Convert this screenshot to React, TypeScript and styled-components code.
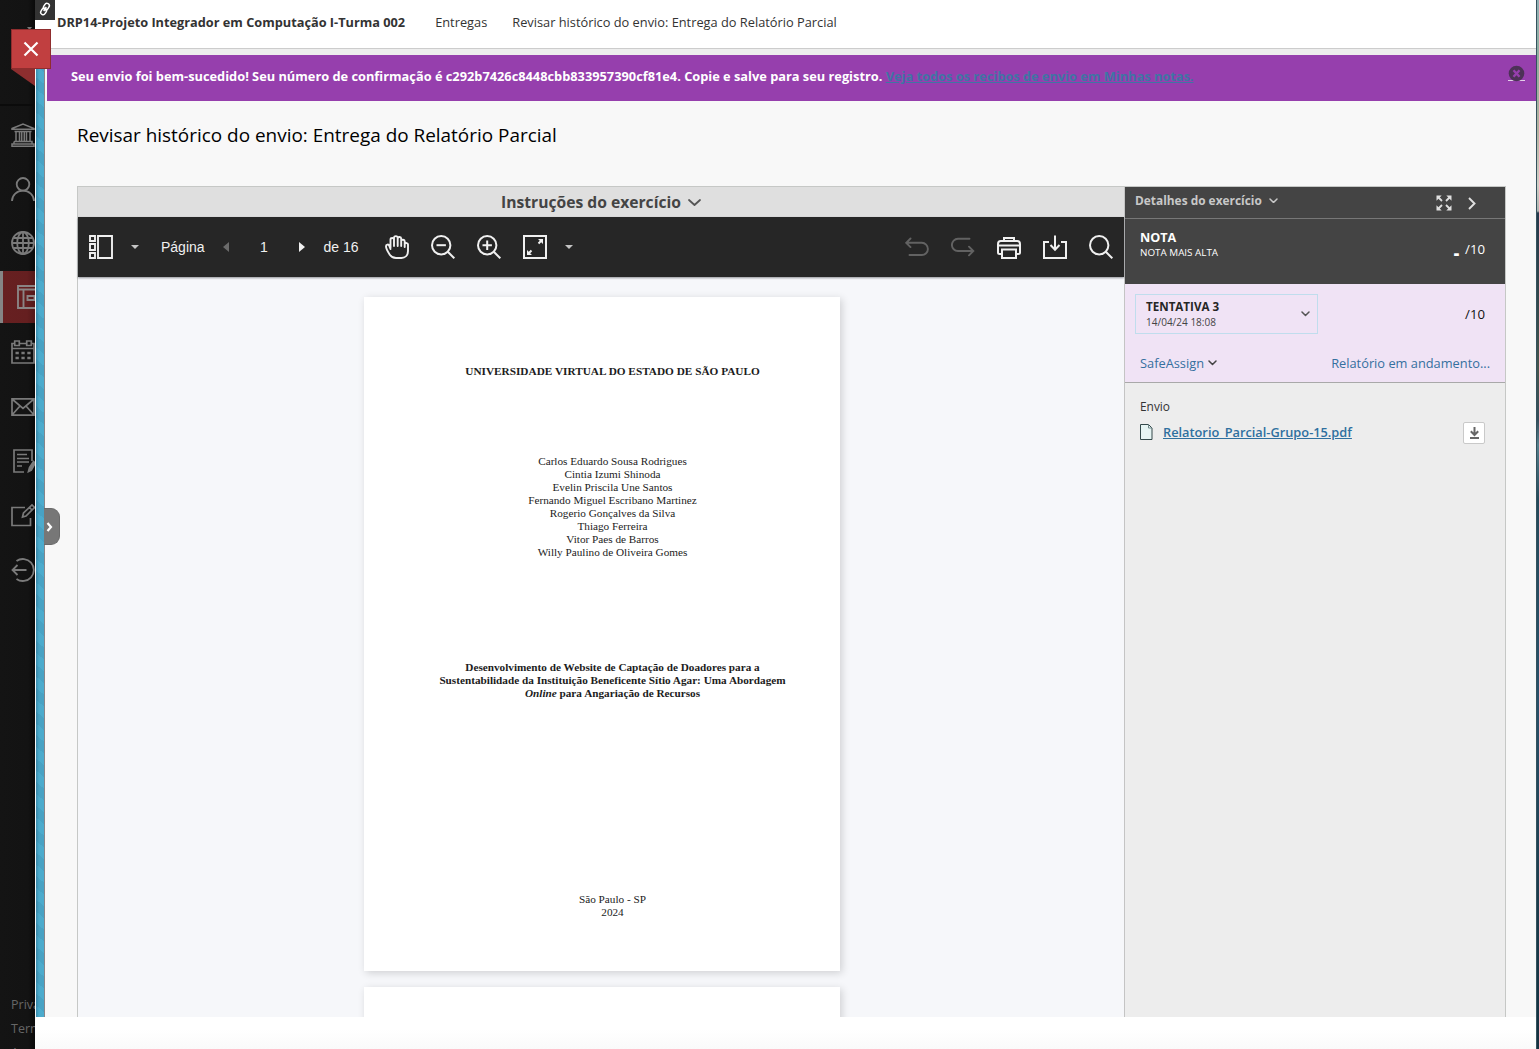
import React from 'react';
import styled, { createGlobalStyle } from 'styled-components';

const Global = createGlobalStyle`
  * { box-sizing: border-box; }
  body { margin: 0; background: #fff; font-family: "Open Sans", "Noto Sans", sans-serif; }
  a { color: inherit; }
`;

const Screen = styled.div`
  position: relative;
  display: flex;
  width: 1539px;
  height: 1049px;
  overflow: hidden;
`;

/* ---------- dark navigation rail ---------- */

const Rail = styled.nav`
  display: flex;
  flex-direction: column;
  flex: none;
  width: 35px;
  height: 1049px;
  overflow: hidden;
  background: linear-gradient(to right, #141414 0, #131313 28px, #0a0a0a 35px);
`;

const RailTop = styled.div`
  display: flex;
  flex: none;
  justify-content: flex-end;
  height: 106px;
  padding: 27px 3px 0 0;
  border-bottom: 2px solid #0b0b0b;
  margin-bottom: 2px;
`;

const RailItem = styled.div<{ $active?: boolean; $late?: boolean }>`
  display: flex;
  flex: none;
  align-items: center;
  height: ${p => (p.$active ? 52 : p.$late ? 54.4 : 54)}px;
  margin: ${p => (p.$active ? '1px 0 2px' : '0')};
  padding-left: ${p => (p.$active ? 14 : 11)}px;
  border-left: ${p => (p.$active ? '3px solid #858585' : '0')};
  background: ${p => (p.$active ? 'linear-gradient(to right, #672021 0, #651f20 24px, #541819 32px)' : 'none')};
  svg { flex: none; }
`;

const RailFooter = styled.div`
  margin-top: auto;
  height: 56px;
  padding-left: 11px;
  flex: none;
  font-size: 12.5px;
  line-height: 24px;
  color: #666;
  white-space: nowrap;
`;

const CloseTab = styled.div`
  position: absolute;
  left: 11px;
  top: 29px;
  z-index: 3;
  display: flex;
  align-items: center;
  justify-content: center;
  width: 40px;
  height: 40px;
  padding-bottom: 1px;
  border: 1px solid #8f2d2e;
  background: #c13f40;
`;

const TabFold = styled.div`
  position: absolute;
  left: 11px;
  top: 69px;
  width: 24px;
  height: 17px;
  background: #8d2e2f;
  clip-path: polygon(0 0, 100% 0, 100% 100%);
`;

const LinkBadge = styled.div`
  position: absolute;
  left: 35px;
  top: 0;
  display: flex;
  align-items: center;
  justify-content: center;
  width: 20px;
  height: 20px;
  padding-bottom: 3px;
  background: #333;
`;

/* ---------- main panel ---------- */

const Panel = styled.main`
  display: flex;
  flex-direction: column;
  flex: none;
  width: 1501px;
  background: #fff;
`;

const Crumbs = styled.header`
  display: flex;
  flex: none;
  height: 49px;
  padding-left: 22px;
  border-bottom: 1px solid #ccc;
  line-height: 45px;
  color: #333;
  white-space: nowrap;
`;

const Crumb = styled.span<{ $bold?: boolean; $gap?: number }>`
  font-weight: ${p => (p.$bold ? 700 : 400)};
  font-size: ${p => (p.$bold ? 12.76 : 12.8)}px;
  margin-right: ${p => p.$gap ?? 0}px;
`;

const Body = styled.div`
  display: flex;
  flex: none;
  height: 968px;
  background: #f8f8f8;
`;

const Stripe = styled.div`
  position: relative;
  flex: none;
  width: 10px;
  border-left: 1px solid #f4f8fa;
  border-right: 1px solid #87868a;
  background:
    linear-gradient(to right, rgba(20, 70, 100, 0.3), rgba(20, 70, 100, 0) 3px),
    repeating-linear-gradient(40deg, #4cabcd 0 9px, #48a2c4 9px 18px);
`;

const Handle = styled.div`
  position: absolute;
  left: 8px;
  top: 459px;
  display: flex;
  align-items: center;
  justify-content: center;
  width: 16px;
  height: 37px;
  padding-right: 5px;
  border-radius: 0 9px 9px 0;
  border: 1px solid #6a6a6a;
  border-left: 0;
  background: #777;
`;

const Content = styled.div`
  display: flex;
  flex-direction: column;
  flex: 1;
`;

const Gap = styled.div`
  flex: none;
  height: 6px;
  background: #ededed;
`;

const Banner = styled.div`
  display: flex;
  flex: none;
  justify-content: space-between;
  height: 46px;
  margin-left: 2px;
  padding: 0 11px 0 24px;
  background: #963fad;
  color: #fff;
  font-size: 12.8px;
  font-weight: 700;
  line-height: 43px;
  white-space: nowrap;
`;

const BannerLink = styled.a`
  color: #4075a4;
  text-decoration: underline;
`;

const Dismiss = styled.div`
  flex: none;
  width: 17px;
  height: 17px;
  margin-top: 10px;
  line-height: 0;
`;

const Title = styled.h1`
  flex: none;
  margin: 0;
  height: 85px;
  padding: 20px 0 0 32px;
  font-size: 18.93px;
  font-weight: 400;
  line-height: 28px;
  color: #000;
`;

const Frame = styled.div`
  display: flex;
  flex: 1;
  min-height: 0;
  margin: 0 30px 0 32px;
  border: 1px solid #c6c8c6;
  border-bottom: 0;
`;

const Viewer = styled.section`
  display: flex;
  flex-direction: column;
  flex: none;
  width: 1047px;
  border-right: 1px solid #c4c4c4;
`;

const Instructions = styled.div`
  display: flex;
  flex: none;
  align-items: center;
  justify-content: center;
  gap: 7px;
  height: 30px;
  background: #dfdfdf;
  color: #444;
  font-size: 15.66px;
  font-weight: 700;
  line-height: 30px;
`;

const Toolbar = styled.div`
  position: relative;
  display: flex;
  flex: none;
  align-items: center;
  height: 60px;
  padding: 0 11px;
  background: #262626;
  box-shadow: 0 1px 2px rgba(20, 25, 35, 0.45);
  color: #f0f0f0;
  font-family: "Liberation Sans", Arial, sans-serif;
  font-size: 14px;
`;

const ToolText = styled.span<{ $w: number }>`
  flex: none;
  width: ${p => p.$w}px;
  text-align: center;
  white-space: nowrap;
`;

const Caret = styled.i<{ $l?: number; $r?: number }>`
  flex: none;
  margin: 0 ${p => p.$r ?? 0}px 0 ${p => p.$l ?? 0}px;
  border: 4px solid transparent;
  border-top: 4.5px solid #c4c4c4;
  border-bottom: 0;
`;

const Step = styled.i<{ $dir: 'prev' | 'next' }>`
  flex: none;
  border: 5px solid transparent;
  ${p => (p.$dir === 'prev'
    ? 'border-left: 0; border-right: 6px solid #6b6b6b; margin-left: 19px;'
    : 'border-right: 0; border-left: 6px solid #f0f0f0; margin-right: 18.5px;')}
`;

const IconGroup = styled.div<{ $push?: boolean; $l?: number }>`
  display: flex;
  gap: 22px;
  margin-left: ${p => (p.$push ? 'auto' : `${p.$l ?? 0}px`)};
`;

const Canvas = styled.div`
  display: flex;
  flex-direction: column;
  flex: 1;
  min-height: 0;
  gap: 16px;
  padding: 20px 0 0 286px;
  overflow: hidden;
  background: #f6f7fa;
`;

const Page = styled.article`
  flex: none;
  width: 476px;
  height: 674px;
  padding: 67.6px 0 0 21px;
  background: #fff;
  box-shadow: 2px 2px 8px rgba(0, 0, 0, 0.16);
  color: #1c1c1c;
  font-family: "Liberation Serif", "Times New Roman", serif;
  font-size: 11.24px;
  line-height: 12.85px;
  text-align: center;
`;

const Block = styled.div<{ $top?: number; $bold?: boolean; $size?: number }>`
  margin-top: ${p => p.$top ?? 0}px;
  font-size: ${p => p.$size ?? 11.23}px;
  font-weight: ${p => (p.$bold ? 700 : 400)};
`;

const Author = styled.div`
  &:first-child { margin-bottom: 0.6px; }
`;

/* ---------- grading sidebar ---------- */

const Side = styled.aside`
  display: flex;
  flex-direction: column;
  flex: none;
  width: 380px;
  background: #ededed;
`;

const SideHead = styled.div`
  display: flex;
  flex: none;
  height: 32px;
  padding: 0 28px 0 10px;
  border-bottom: 1px solid #777;
  background: #444;
  color: #c8c8c8;
  font-size: 11.9px;
  font-weight: 700;
  line-height: 27px;
`;

const HeadLabel = styled.div`
  display: flex;
  align-items: center;
  gap: 7px;
  height: 27px;
`;

const HeadActions = styled.div`
  display: flex;
  align-items: center;
  gap: 15px;
  height: 32px;
  margin-left: auto;
`;

const Grade = styled.div`
  display: flex;
  flex: none;
  justify-content: space-between;
  height: 65px;
  padding: 10px 20px 0 15px;
  background: #444;
  color: #fff;
`;

const GradeName = styled.div`
  font-size: 12.6px;
  font-weight: 700;
  line-height: 17px;
`;

const GradeNote = styled.div`
  font-size: 9.85px;
  line-height: 13px;
`;

const Score = styled.div<{ $top: number }>`
  display: flex;
  align-items: center;
  gap: 6px;
  height: 20px;
  margin-top: ${p => p.$top}px;
  font-size: 13.2px;
`;

const Dash = styled.span`
  padding-top: 7px;
  font-size: 17px;
  font-weight: 800;
  line-height: 20px;
`;

const Attempt = styled.div`
  flex: none;
  height: 99px;
  padding: 10px 15px 0 10px;
  border-bottom: 1px solid #a9a9a9;
  background: #f0e3f5;
  color: #111;
`;

const Row = styled.div<{ $pr?: number; $pl?: number; $top?: number }>`
  display: flex;
  justify-content: space-between;
  margin-top: ${p => p.$top ?? 0}px;
  padding: 0 ${p => p.$pr ?? 0}px 0 ${p => p.$pl ?? 0}px;
`;

const Picker = styled.div`
  display: flex;
  align-items: center;
  justify-content: space-between;
  width: 183px;
  height: 40px;
  padding: 0 7px 0 10px;
  border: 1px solid #c0dded;
`;

const PickerName = styled.div`
  font-size: 11.6px;
  font-weight: 700;
  line-height: 16px;
  color: #262626;
`;

const PickerDate = styled.div`
  font-size: 10.04px;
  line-height: 15px;
  color: #444;
`;

const Action = styled.span`
  display: flex;
  align-items: center;
  gap: 4px;
  font-size: 12.82px;
  line-height: 20px;
  color: #35709f;
`;

const Files = styled.div`
  padding: 13px 20px 0 15px;
`;

const FilesLabel = styled.div`
  font-size: 11.9px;
  line-height: 20px;
  color: #333;
`;

const FileRow = styled.div`
  display: flex;
  align-items: center;
  height: 22px;
  margin-top: 6px;
`;

const FileName = styled.div`
  display: flex;
  align-items: center;
  gap: 10px;
  height: 22px;
  padding-bottom: 2px;
`;

const FileLink = styled.a`
  color: #2f709f;
  font-size: 12.79px;
  font-weight: 600;
  line-height: 20px;
  text-decoration: underline;
`;

const Download = styled.div`
  display: flex;
  align-items: center;
  justify-content: center;
  width: 22px;
  height: 22px;
  margin-left: auto;
  border: 1px solid #c9c9c9;
  border-radius: 2px;
  background: #fff;
`;

const Below = styled.div`
  flex: 1;
  background: linear-gradient(#fff 40%, #fafafa);
`;

const Backdrop = styled.div`
  flex: 1;
  border-left: 1px solid #34525e;
  background: linear-gradient(#91b0b5 0, #8fae9f 55px, #b3b3a0 130px, #cfcfc6 185px, #aeb5b0 211px, #26394c 213px, #33474a 300px, #46554c 370px, #344d5b 420px, #557f8c 445px, #24495a 500px, #28506a 700px, #1b3b4b 900px, #14303f 1049px);
`;

/* ---------- icons ---------- */

const Icon = ({ w = 24, h = 24, c = '#f0f0f0', s = 2, children }: {
  w?: number; h?: number; c?: string; s?: number; children: React.ReactNode;
}) => (
  <svg width={w} height={h} viewBox={`0 0 ${w} ${h}`} fill="none" stroke={c} strokeWidth={s}>{children}</svg>
);

const Chevron = ({ w, h, c, s = 1.5 }: { w: number; h: number; c: string; s?: number }) => (
  <Icon w={w} h={h} c={c} s={s}><path d={`M1 1 L${w / 2} ${h - 1} L${w - 1} 1`} strokeLinecap="round" strokeLinejoin="round" /></Icon>
);

const grey = '#7a7a7a';

const railIcons = [
  <Icon c={grey} s={1.5}><path d="M1 5.500 12 1l11 4.500v.8H1zM3.500 8.500h17M5 8v10M8.500 8v10M10.700 8v10M13.300 8v10M15.500 8v10M19 8v10M3 18.500h18v2.500M3 18.500V21M1 21h22v2.300H1z" /></Icon>,
  <Icon c={grey} s={1.8}><circle cx="12" cy="7.300" r="6.300" /><path d="M1 24c0-6 5-10.300 11-10.300S23 18 23 24" /></Icon>,
  <Icon c={grey} s={1.8}><circle cx="12" cy="12" r="11" /><ellipse cx="12" cy="12" rx="5.800" ry="11" /><path d="M12 1v22M1 12h22M2.500 7h19M2.500 17h19" /></Icon>,
  <Icon c="#8a8484" s={1.9}><path d="M1 1h22v22H1zM1 4.500h22M6.500 4.500V23M10.500 11h7v4h-7z" /></Icon>,
  <Icon c={grey} s={1.7}><path d="M3.500 3.500H1v19.500h22V3.500h-2.500M8.500 3.500h7M1 8.500h22" /><path d="M3.700 1h4.600v4.500H3.700zM15.700 1h4.600v4.500h-4.600z" /><path d="M4.500 13h3.300M10.400 13h3.300M16.300 13h3.300M4.500 18h3.300M10.400 18h3.300M16.300 18h3.300" strokeWidth="2.700" /></Icon>,
  <Icon c={grey} s={1.7}><path d="M1 3.800h22v16.400H1zM1 4l11 9.500L23 4M1 20l8-9M23 20l-8-9" /></Icon>,
  <Icon c={grey} s={1.7}><path d="M21 12V1H3v22h10M6 5.500h10M6 9.500h12M6 13h12M6 17h5" /><path d="m17.500 22.500 1-4 4-6 1.800 1.500-4 7z" fill={grey} /></Icon>,
  <Icon c={grey} s={1.7}><path d="M14 4.500H1V22.500h18.500V15" /><path d="m11.500 14 1-4 8.500-8 2.500 2.500-8.500 8.500zM18.500 4.500 21 7" /></Icon>,
  <Icon c={grey} s={1.8}><path d="M5.500 3a11 11 0 1 1 0 18M15.500 12H1.200M6.500 7l-5 5 5 5" /></Icon>,
];

const PanelIcon = () => <Icon s={1.9}><path d="M1 1h5v5H1zM1 9h5v6H1zM1 18h5v5H1zM9 1h14v22H9z" /></Icon>;

const HandIcon = () => (
  <Icon s={1.9}>
    <path d="M5.500 13V4.500c0-2 3.500-2 3.500 0V11M9 9V2.800c0-2.300 3.700-2.300 3.700 0V11M12.700 3.300c.3-1.900 3.500-1.600 3.500.5V11M16.200 5.800c.5-1.600 3.500-1.300 3.500.5V12M19.700 8.800c.8-1.300 3.300-.9 3.300.8V16c0 4.500-3 7-6.500 7H11c-3 0-4.700-.9-6.200-3.200C2.600 16.500 1 12.700 1 11.300c0-2 2.700-2.300 3.200-.7L5.500 14" strokeLinecap="round" strokeLinejoin="round" />
  </Icon>
);

const Lens = ({ sign }: { sign?: string }) => (
  <Icon s={2}><circle cx="10.200" cy="10.200" r="9.200" /><path d="m16.800 16.800 6.500 6.500" />{sign && <path d={sign} />}</Icon>
);

const FitIcon = () => (
  <Icon s={2}>
    <path d="M1 1h22v22H1z" />
    <path d="m15.500 8.500 3-3M8.500 15.500l-3 3" />
    <path d="M15 4h5v5zM4 15v5h5z" fill="#f0f0f0" stroke="none" />
  </Icon>
);

const authors = [
  'Carlos Eduardo Sousa Rodrigues', 'Cintia Izumi Shinoda', 'Evelin Priscila Une Santos',
  'Fernando Miguel Escribano Martinez', 'Rogerio Gonçalves da Silva', 'Thiago Ferreira',
  'Vitor Paes de Barros', 'Willy Paulino de Oliveira Gomes',
];

export default function App() {
  return (
    <Screen>
      <Global />
      <Rail>
        <RailTop><Icon w={5} h={3} s={0}><path d="M0 0h5L2.500 3z" fill="#777" /></Icon></RailTop>
        {railIcons.map((icon, i) => <RailItem key={i} $active={i === 3} $late={i > 3}>{icon}</RailItem>)}
        <RailFooter>Priva<br />Term<br />A</RailFooter>
      </Rail>

      <Panel>
        <Crumbs>
          <Crumb $bold $gap={30}>DRP14-Projeto Integrador em Computação I-Turma 002</Crumb>
          <Crumb $gap={25}>Entregas</Crumb>
          <Crumb>Revisar histórico do envio: Entrega do Relatório Parcial</Crumb>
        </Crumbs>
        <Body>
          <Stripe>
            <Handle><Icon w={7} h={10} c="#fff" s={2.2}><path d="m1.500 1 3.500 4-3.500 4" /></Icon></Handle>
          </Stripe>
          <Content>
            <Gap />
            <Banner>
              <span>
                Seu envio foi bem-sucedido! Seu número de confirmação é c292b7426c8448cbb833957390cf81e4. Copie e salve para seu registro.{' '}
                <BannerLink>Veja todos os recibos de envio em Minhas notas.</BannerLink>
              </span>
              <Dismiss>
                <Icon w={17} h={17} c="#963fad" s={2.4}>
                  <path d="M0 15.500h17" stroke="#e4cfe9" strokeWidth="1" />
                  <circle cx="8.500" cy="8.500" r="7.800" fill="#4d3157" stroke="none" />
                  <path d="m5.500 5.200 6 6.600M11.500 5.200l-6 6.600" />
                </Icon>
              </Dismiss>
            </Banner>
            <Title>Revisar histórico do envio: Entrega do Relatório Parcial</Title>
            <Frame>
              <Viewer>
                <Instructions>Instruções do exercício <Chevron w={13} h={7} c="#555" s={1.8} /></Instructions>
                <Toolbar>
                  <PanelIcon />
                  <Caret $l={18} $r={22} />
                  <ToolText $w={43}>Página</ToolText>
                  <Step $dir="prev" />
                  <ToolText $w={70}>1</ToolText>
                  <Step $dir="next" />
                  <ToolText $w={35}>de 16</ToolText>
                  <IconGroup $l={26.5}>
                    <HandIcon />
                    <Lens sign="M5.500 10.200h9.400" />
                    <Lens sign="M5.500 10.200h9.400M10.200 5.500v9.400" />
                    <FitIcon />
                  </IconGroup>
                  <Caret $l={18} />
                  <IconGroup $push>
                    <Icon c="#626262" s={1.9}><path d="M5.500 3.500 1.200 7.800l4.300 4.300M1.500 7.800h15.300a5.900 5.900 0 0 1 0 12.200H4.500" strokeLinecap="round" /></Icon>
                    <Icon c="#626262" s={1.9}><path d="M18.500 3.800H7a5.900 5.900 0 0 0 0 12.200h15.300M18 11.700l4.300 4.300-4.300 4.300" strokeLinecap="round" /></Icon>
                    <Icon s={2}><path d="M7 6V3h10v3M4.500 19H2.800C1.500 19 1 18.500 1 17.500V9c0-1.800 1-3 2.800-3h16.400C22 6 23 7.200 23 9v8.500c0 1-.5 1.500-1.800 1.500h-1.700M1 10.500h22M5 14.500h14V23H5z" /></Icon>
                    <Icon s={2}><path d="M6 7H1v16h22V7h-5M12 .5v14M7.500 10l4.500 4.700L16.500 10" /></Icon>
                    <Lens />
                  </IconGroup>
                </Toolbar>
                <Canvas>
                  <Page>
                    <Block $bold $size={11.28}>UNIVERSIDADE VIRTUAL DO ESTADO DE SÃO PAULO</Block>
                    <Block $top={77.600}>{authors.map(a => <Author key={a}>{a}</Author>)}</Block>
                    <Block $top={103} $bold>
                      Desenvolvimento de Website de Captação de Doadores para a<br />
                      Sustentabilidade da Instituição Beneficente Sítio Agar: Uma Abordagem<br />
                      <em>Online</em> para Angariação de Recursos
                    </Block>
                    <Block $top={193.200}>São Paulo - SP<br />2024</Block>
                  </Page>
                  <Page />
                </Canvas>
              </Viewer>

              <Side>
                <SideHead>
                  <HeadLabel>Detalhes do exercício <Chevron w={9} h={5.500} c="#c8c8c8" /></HeadLabel>
                  <HeadActions>
                    <Icon w={16} h={16} c="#e0e0e0" s={1.8}>
                      <path d="m2 2 4 4M14 2l-4 4M2 14l4-4M14 14l-4-4" />
                      <path d="M.5.5h5.200l-5.200 5.200zM15.500.5v5.200L10.300.5zM.5 15.500v-5.200l5.200 5.200zM15.500 15.500h-5.200l5.200-5.200z" fill="#e0e0e0" stroke="none" />
                    </Icon>
                    <Icon w={10} h={13} c="#e0e0e0" s={1.900}><path d="m2 1 5.500 5.500L2 12" /></Icon>
                  </HeadActions>
                </SideHead>
                <Grade>
                  <div>
                    <GradeName>NOTA</GradeName>
                    <GradeNote>NOTA MAIS ALTA</GradeNote>
                  </div>
                  <Score $top={10}><Dash>-</Dash>/10</Score>
                </Grade>
                <Attempt>
                  <Row $pr={5}>
                    <Picker>
                      <div>
                        <PickerName>TENTATIVA 3</PickerName>
                        <PickerDate>14/04/24 18:08</PickerDate>
                      </div>
                      <Chevron w={9} h={5.500} c="#555" />
                    </Picker>
                    <Score $top={10}>/10</Score>
                  </Row>
                  <Row $pl={5} $top={19}>
                    <Action>SafeAssign <Chevron w={9} h={5.500} c="#444" /></Action>
                    <Action>Relatório em andamento...</Action>
                  </Row>
                </Attempt>
                <Files>
                  <FilesLabel>Envio</FilesLabel>
                  <FileRow>
                    <FileName>
                      <Icon w={13} h={16} c="#34494b" s={1}><path d="M.5.5h8l3.500 3.500v11.500H.5z" fill="#e6f4f3" /><path d="M8.500.5V4H12" stroke="#71888a" /></Icon>
                      <FileLink>Relatorio_Parcial-Grupo-15.pdf</FileLink>
                    </FileName>
                    <Download>
                      <Icon w={11} h={12} c="#666" s={2}><path d="M5.500 0v7M1.800 4.300l3.700 3.700 3.700-3.700M1 11h9" /></Icon>
                    </Download>
                  </FileRow>
                </Files>
              </Side>
            </Frame>
          </Content>
        </Body>
        <Below />
      </Panel>
      <Backdrop />

      <LinkBadge>
        <Icon w={14} h={14} c="#fff" s={1.5}>
          <g transform="rotate(30 7 7)"><rect x="4.600" y="0.800" width="4.800" height="6.800" rx="2.400" /><rect x="4.600" y="6.400" width="4.800" height="6.800" rx="2.400" /><path d="M7 4.500v5" /></g>
        </Icon>
      </LinkBadge>
      <TabFold />
      <CloseTab>
        <Icon w={16} h={16} c="#fff" s={2.200}><path d="m1.500 1.500 13 13M14.500 1.500l-13 13" /></Icon>
      </CloseTab>
    </Screen>
  );
}
